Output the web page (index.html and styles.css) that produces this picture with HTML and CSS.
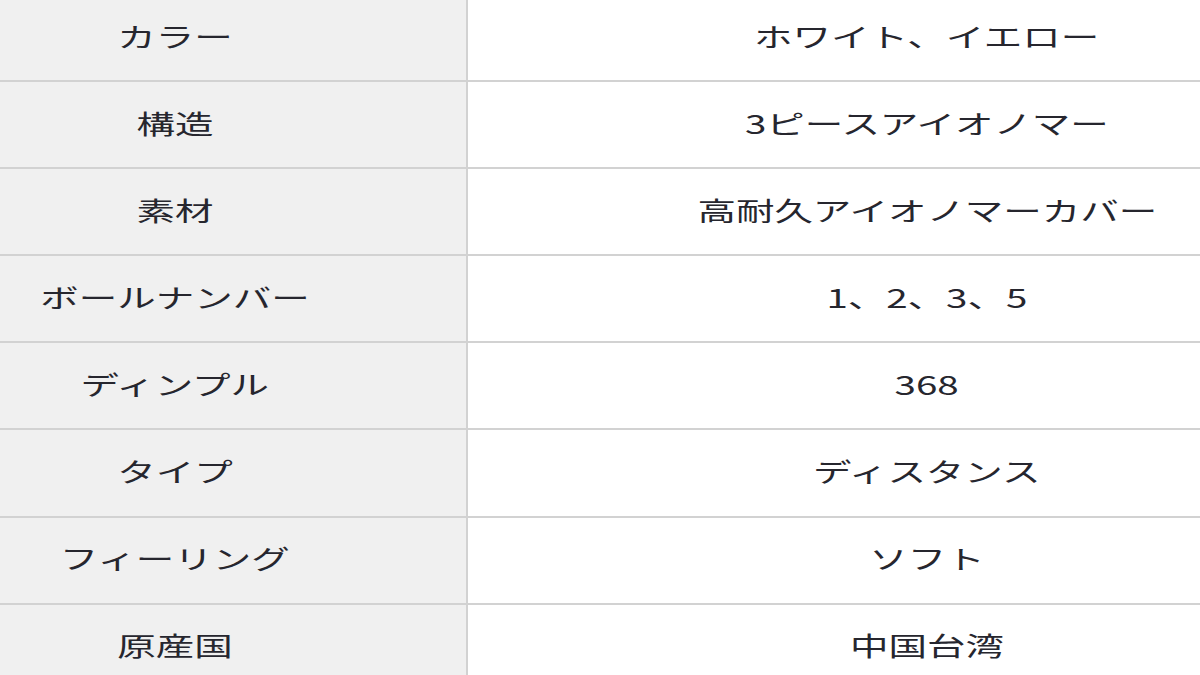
FILE: index.html
```html
<!DOCTYPE html>
<html lang="ja">
<head>
<meta charset="utf-8">
<link rel="stylesheet" href="styles.css">
</head>
<body>
<table class="spec">
  <tr><th><span class="t">カラー</span></th><td><span class="t">ホワイト、イエロー</span></td></tr>
  <tr><th><span class="t">構造</span></th><td><span class="t">3ピースアイオノマー</span></td></tr>
  <tr><th><span class="t">素材</span></th><td><span class="t">高耐久アイオノマーカバー</span></td></tr>
  <tr><th><span class="t">ボールナンバー</span></th><td><span class="t">1、2、3、5</span></td></tr>
  <tr><th><span class="t">ディンプル</span></th><td><span class="t">368</span></td></tr>
  <tr><th><span class="t">タイプ</span></th><td><span class="t">ディスタンス</span></td></tr>
  <tr><th><span class="t">フィーリング</span></th><td><span class="t">ソフト</span></td></tr>
  <tr><th><span class="t">原産国</span></th><td><span class="t">中国台湾</span></td></tr>
</table>
</body>
</html>
```

FILE: styles.css
```css
html, body {
  margin: 0;
  padding: 0;
  background: #ffffff;
  overflow: hidden;
}
body {
  width: 1200px;
  height: 675px;
  font-family: "Noto Sans CJK JP", "Noto Sans", sans-serif;
  color: #26262e;
}
.spec {
  border-collapse: collapse;
  margin-top: -5px;
  width: 1200px;
  table-layout: fixed;
}
.spec th, .spec td {
  height: 81.1px;
  padding: 0 0 4px 0;
  border-bottom: 2px solid #d2d2d2;
  text-align: center;
  vertical-align: middle;
  font-weight: 400;
  font-size: 26px;
  line-height: 1;
}
.spec th {
  width: 350px;
  padding-right: 116px;
  background: #f0f0f0;
  border-right: 2px solid #d2d2d2;
}
.spec td {
  padding-left: 186px;
  background: #ffffff;
}
.t {
  display: inline-block;
  transform: scaleX(1.48);
  transform-origin: center;
  white-space: nowrap;
}
```
